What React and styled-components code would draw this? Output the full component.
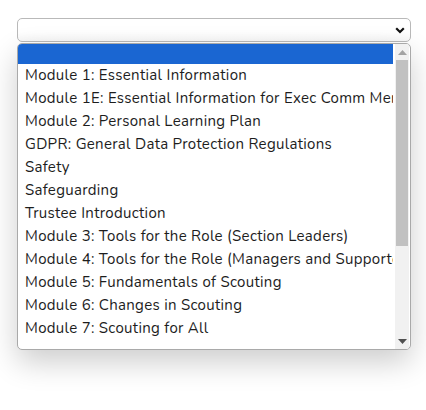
import React from 'react';
import styled, { createGlobalStyle } from 'styled-components';

const GlobalStyle = createGlobalStyle`
  html, body {
    margin: 0;
    padding: 0;
    background: #ffffff;
  }
  body {
    font-family: 'Nunito', 'Lato', 'Noto Sans', sans-serif;
  }
`;

const Page = styled.div`
  box-sizing: border-box;
  min-height: 410px;
  padding: 18px 15px 0 17px;
  width: 426px;
`;

const SelectBox = styled.div`
  box-sizing: border-box;
  height: 24px;
  border: 1px solid #b9b9b9;
  border-radius: 5px;
  background: linear-gradient(#ffffff 60%, #f7f7f7);
  display: flex;
  align-items: center;
  justify-content: flex-end;
  padding-right: 5px;
`;

const Popup = styled.div`
  position: relative;
  box-sizing: border-box;
  margin-top: 1px;
  height: 307px;
  border: 1px solid #a9a9a9;
  border-radius: 5px;
  background: #ffffff;
  box-shadow: 0 12px 30px rgba(0, 0, 0, 0.2);
  display: flex;
  overflow: hidden;
`;

const List = styled.div`
  flex: 1;
  overflow: hidden;
  margin-right: 2px;
`;

const Option = styled.div`
  height: ${(p) => (p.empty ? '20px' : '23px')};
  line-height: 23px;
  padding-left: 7px;
  font-size: 15px;
  letter-spacing: 0.3px;
  color: #1d1d1d;
  white-space: nowrap;
  overflow: hidden;
  background: ${(p) => (p.selected ? '#1a66d2' : 'transparent')};
`;

const Scrollbar = styled.div`
  width: 14px;
  margin-right: 1px;
  background: #f1f1f1;
  display: flex;
  flex-direction: column;
  align-items: center;
`;

const ArrowCell = styled.div`
  height: 16px;
  width: 100%;
  display: flex;
  align-items: center;
  justify-content: center;
`;

const Thumb = styled.div`
  width: 12px;
  height: 186px;
  background: #c1c1c1;
`;

const Track = styled.div`
  flex: 1;
`;

const options = [
  'Module 1: Essential Information',
  'Module 1E: Essential Information for Exec Comm Members',
  'Module 2: Personal Learning Plan',
  'GDPR: General Data Protection Regulations',
  'Safety',
  'Safeguarding',
  'Trustee Introduction',
  'Module 3: Tools for the Role (Section Leaders)',
  'Module 4: Tools for the Role (Managers and Supporters)',
  'Module 5: Fundamentals of Scouting',
  'Module 6: Changes in Scouting',
  'Module 7: Scouting for All',
];

const App = () => {
  return (
    <>
      <GlobalStyle />
      <Page>
        <SelectBox>
          <svg width="10" height="7" viewBox="0 0 10 7">
            <path d="M1.2 1.3 L5 5 L8.8 1.3" fill="none" stroke="#111" strokeWidth="2.2" />
          </svg>
        </SelectBox>
        <Popup>
          <List>
            <Option empty selected />
            {options.map((o) => (
              <Option key={o}>{o}</Option>
            ))}
          </List>
          <Scrollbar>
            <ArrowCell>
              <svg width="9" height="5" viewBox="0 0 9 5">
                <path d="M0 5 L4.5 0 L9 5 Z" fill="#a3a3a3" />
              </svg>
            </ArrowCell>
            <Thumb />
            <Track />
            <ArrowCell>
              <svg width="9" height="5" viewBox="0 0 9 5">
                <path d="M0 0 L4.5 5 L9 0 Z" fill="#505050" />
              </svg>
            </ArrowCell>
          </Scrollbar>
        </Popup>
      </Page>
    </>
  );
};

export default App;
